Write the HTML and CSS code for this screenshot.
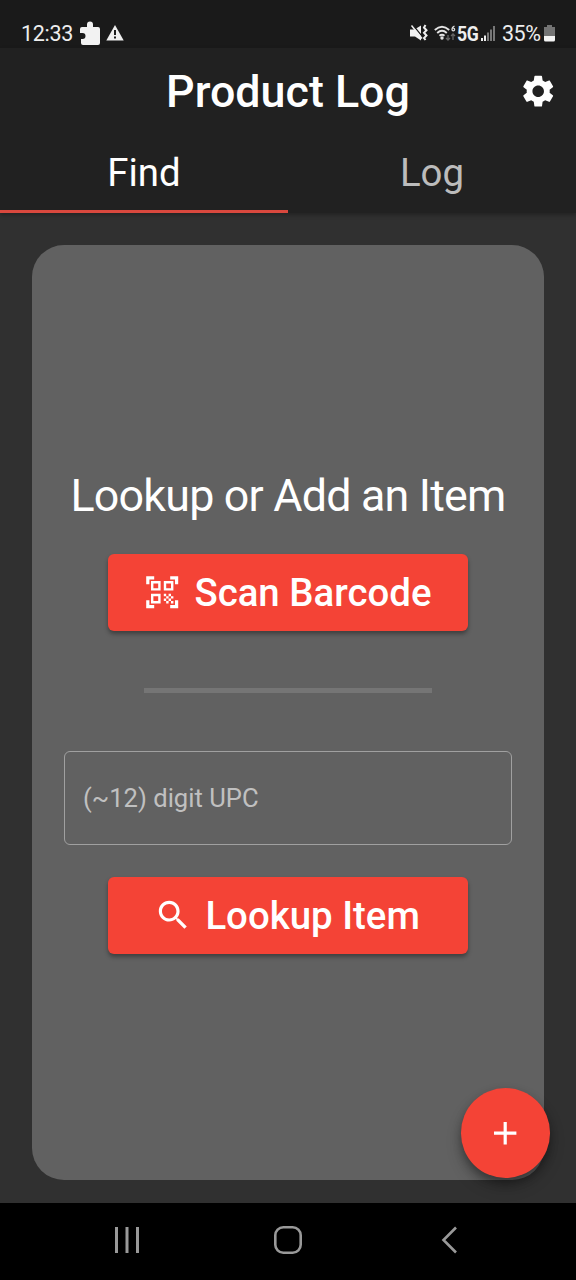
FILE: index.html
```html
<!DOCTYPE html>
<html lang="en">
<head>
<meta charset="utf-8">
<title>Product Log</title>
<link rel="stylesheet" href="styles.css">
</head>
<body>
<div class="screen">
  <div class="status-bar">
    <span class="status-text clock">12:33</span>
    <svg class="puzzle" width="20" height="25" viewBox="0 0 20 25"><path fill="#f2f2f2" d="M2 6h5V3.500a3 3 0 0 1 6 0V6h5q2 0 2 2v14q0 2-2 2H3q-2 0-2-2v-4h1.500a3 3 0 0 0 0-6H0V8q0-2 2-2z"/></svg>
    <svg class="warning" width="18" height="16" viewBox="0 0 18 16"><path fill="#eee" d="M9 0l8.700 15.500H.3z"/><path fill="#1a1a1a" d="M8 5h2v5H8zM8 11.500h2v2H8z"/></svg>
    <span class="spacer"></span>
    <svg class="mute" width="18" height="18" viewBox="0 0 18 18"><path fill="#f0f0f0" d="M0 5.500h4.500L11 1.500v15l-6-4H0z"/><path fill="none" stroke="#1a1a1a" stroke-width="1.300" d="M3.200 1.500l9 11"/><path fill="none" stroke="#f0f0f0" stroke-width="1.500" d="M1.500 1.500l10.500 13"/><path fill="none" stroke="#f0f0f0" stroke-width="2" d="M15.500 1l-1.500 2.500 2.500 2.700-2.500 2.600 2.500 2.700-2.500 2.500 1.500 2"/></svg>
    <svg class="wifi" width="22" height="17" viewBox="0 0 22 17"><g fill="none" stroke="#e4e4e4" stroke-width="1.900"><path d="M.8 5q7.200-6.500 14.400 0M3.200 8q4.800-4.300 9.600 0M5.500 10.800q2.500-2.200 5 0"/></g><circle cx="8" cy="13" r="1.700" fill="#e4e4e4"/><path fill="none" stroke="#ddd" stroke-width="1.300" d="M20.500 1q-2.500 1-2.500 3.500 0 1.300 1.300 1.300t1.300-1.300-1.500-1.300"/><path fill="none" stroke="#666" stroke-width="1.300" d="M14 10v5m-2-2l2 2 2-2M19 15v-6m-2 2l2-2 2 2"/></svg>
    <span class="network">5G</span>
    <svg class="signal" width="15" height="16" viewBox="0 0 15 16"><path fill="#eee" d="M0 12h2v3H0zM3 9.500h2V15H3z"/><path fill="#777" d="M6 6.500h2V15H6zM9 3.500h2V15H9zM12 0h2v15h-2z"/></svg>
    <span class="status-text percent">35%</span>
    <svg class="battery" width="11" height="17" viewBox="0 0 11 17"><path fill="#747474" d="M3 0h5v2h3v9H0V2h3z"/><path fill="#f4f4f4" d="M0 11h11v4q0 1.500-1.500 1.500h-8Q0 16.500 0 15z"/></svg>
  </div>
  <header class="app-bar">
    <div class="title-row">
      <h1 class="title">Product Log</h1>
      <svg class="icon gear" viewBox="0 0 24 24"><path fill="#fff" d="M19.140 12.940c.04-.3.060-.61.060-.94 0-.32-.02-.64-.07-.94l2.030-1.580c.18-.14.230-.41.120-.61l-1.920-3.320c-.12-.22-.37-.29-.59-.22l-2.390.96c-.5-.38-1.030-.7-1.620-.94l-.36-2.540c-.04-.24-.24-.41-.48-.41h-3.840c-.24 0-.43.170-.47.410l-.36 2.540c-.59.240-1.130.570-1.620.940l-2.390-.96c-.22-.08-.47 0-.59.220L2.740 8.870c-.12.210-.08.470.120.610l2.030 1.580c-.05.3-.09.630-.09.940s.020.640.070.940l-2.030 1.580c-.18.140-.23.410-.12.610l1.920 3.320c.12.220.370.290.590.220l2.390-.96c.5.380 1.030.7 1.620.940l.36 2.540c.05.240.240.410.480.410h3.840c.24 0 .44-.17.470-.41l.36-2.540c.59-.24 1.130-.56 1.620-.94l2.390.960c.22.080.470 0 .59-.22l1.920-3.320c.12-.22.070-.47-.12-.61l-2.010-1.580zM12 15.600c-1.980 0-3.600-1.620-3.600-3.600s1.620-3.600 3.600-3.600 3.600 1.620 3.600 3.600-1.620 3.600-3.600 3.600z"/></svg>
    </div>
    <nav class="tabs">
      <div class="tab active">Find</div>
      <div class="tab">Log</div>
    </nav>
  </header>
  <main class="content">
    <section class="card">
      <h2 class="heading">Lookup or Add an Item</h2>
      <button class="button scan"><svg class="icon" viewBox="0 0 24 24"><path fill="#fff" d="M9.500 6.500v3h-3v-3h3M11 5H5v6h6V5zm-1.500 9.500v3h-3v-3h3M11 13H5v6h6v-6zm6.500-6.500v3h-3v-3h3M19 5h-6v6h6V5zm-6 8h1.500v1.500H13V13zm1.500 1.500H16V16h-1.500v-1.500zM16 13h1.500v1.500H16V13zm-3 3h1.500v1.500H13V16zm1.500 1.500H16V19h-1.500v-1.500zM16 16h1.500v1.500H16V16zm1.500-1.500H19V16h-1.500v-1.500zm0 3H19V19h-1.500v-1.500zM22 7h-2V4h-3V2h5v5zm0 15v-5h-2v3h-3v2h5zM2 22h5v-2H4v-3H2v5zM2 2v5h2V4h3V2H2z"/></svg><span>Scan Barcode</span></button>
      <div class="divider"></div>
      <input class="upc" type="text" placeholder="(~12) digit UPC">
      <button class="button lookup"><svg class="icon" viewBox="0 0 24 24"><path fill="#fff" d="M15.500 14h-.79l-.28-.27C15.410 12.590 16 11.110 16 9.500 16 5.910 13.090 3 9.500 3S3 5.910 3 9.500 5.910 16 9.500 16c1.610 0 3.090-.59 4.230-1.570l.27.280v.790l5 4.990L20.490 19l-4.990-5zm-6 0C7.010 14 5 11.990 5 9.500S7.010 5 9.500 5 14 7.010 14 9.500 11.990 14 9.500 14z"/></svg><span>Lookup Item</span></button>
    </section>
    <button class="fab" aria-label="Add"><svg class="icon" viewBox="0 0 24 24"><path fill="#fff" d="M19 13h-6v6h-2v-6H5v-2h6V5h2v6h6v2z"/></svg></button>
  </main>
  <footer class="nav-bar">
    <svg width="28" height="28" viewBox="0 0 28 28"><path fill="none" stroke="#999" stroke-width="3" d="M3.500 1v26M14 1v26M24.500 1v26"/></svg>
    <svg width="28" height="28" viewBox="0 0 28 28"><rect x="1.300" y="1.300" width="25.400" height="25.400" rx="8" fill="none" stroke="#999" stroke-width="2.600"/></svg>
    <svg width="28" height="28" viewBox="0 0 28 28"><path fill="none" stroke="#999" stroke-width="2.600" d="M21 1.500L8.500 14 21 26.500"/></svg>
  </footer>
</div>
</body>
</html>
```
FILE: styles.css
```css
* { box-sizing: border-box; }
body { margin: 0; background: #303030; font-family: Roboto, "Noto Sans", sans-serif; color: #fff; }
h1, h2 { margin: 0; }
button { border: 0; padding: 0; font-family: inherit; color: #fff; }
svg { display: block; flex: none; }
.screen { width: 576px; height: 1280px; display: flex; flex-direction: column; overflow: hidden; }
.icon { width: 38.4px; height: 38.4px; }

.status-bar { height: 48px; flex: none; display: flex; align-items: flex-start; background: #1a1a1a; padding: 0 21px; }
.status-text { font-size: 21.5px; line-height: 26px; margin-top: 21px; color: #eee; white-space: nowrap; }
.clock { width: 59px; letter-spacing: -0.3px; }
.puzzle { margin-top: 21px; }
.warning { margin: 25px 0 0 6px; }
.spacer { flex: 1; }
.mute { margin: 24px 6px 0 0; }
.wifi { margin: 25px 1px 0 0; }
.network { font-size: 20.5px; font-weight: 700; line-height: 22px; margin-top: 23px; color: #eee; width: 24px; letter-spacing: -0.5px; transform: scaleX(0.86); transform-origin: left; }
.signal { margin: 26px 6px 0 0; }
.percent { width: 42px; letter-spacing: -0.5px; }
.battery { margin-top: 25px; }

.app-bar { height: 165px; flex: none; background: #212121; z-index: 1; box-shadow: 0 2px 4px rgba(0, 0, 0, 0.3); }
.title-row { height: 87px; display: grid; grid-template-columns: 1fr auto 1fr; align-items: center; padding: 0 19px; }
.title { grid-column: 2; font-size: 44.8px; font-weight: 500; line-height: 52px; white-space: nowrap; }
.gear { justify-self: end; }
.tabs { height: 78px; display: flex; }
.tab { flex: 1; display: flex; align-items: center; justify-content: center; padding-bottom: 1px; font-size: 38.4px; color: #bcbcbc; border-bottom: 3px solid transparent; }
.tab.active { color: #fff; border-color: #d9483e; }

.content { flex: 1; position: relative; padding: 32px 32px 23px; display: flex; }
.card { flex: 1; min-width: 0; background: #616161; border-radius: 32px; display: flex; flex-direction: column; align-items: center; padding: 224px 32px 0; }
.heading { font-size: 44.8px; font-weight: 400; line-height: 53px; letter-spacing: -0.8px; white-space: nowrap; }
.button { width: 360px; height: 77px; display: flex; align-items: center; background: #f44336; border-radius: 6px; font-size: 38.4px; font-weight: 500; white-space: nowrap; box-shadow: 0 3px 4px rgba(0, 0, 0, 0.35); }
.scan { margin-top: 32px; padding-left: 35px; gap: 13px; }
.divider { width: 288px; height: 5px; margin-top: 57px; background: #757575; }
.upc { width: 100%; height: 94px; margin: 58px 0 32px; padding: 0 18px; border: 1.600px solid #a0a0a0; border-radius: 6px; background: transparent; font: 25.600px Roboto, sans-serif; color: #fff; }
.upc::placeholder { color: #c0c0c0; opacity: 1; }
.lookup { padding-left: 46px; gap: 13px; }
.fab { position: absolute; right: 25.600px; bottom: 25.400px; width: 89.600px; height: 89.600px; border-radius: 50%; background: #f44336; display: flex; align-items: center; justify-content: center; box-shadow: 0 5px 8px rgba(0, 0, 0, 0.3), 0 9px 16px rgba(0, 0, 0, 0.2); }

.nav-bar { height: 77px; flex: none; background: #000; display: flex; justify-content: space-between; align-items: center; padding: 0 113px 3px 113px; }
```
